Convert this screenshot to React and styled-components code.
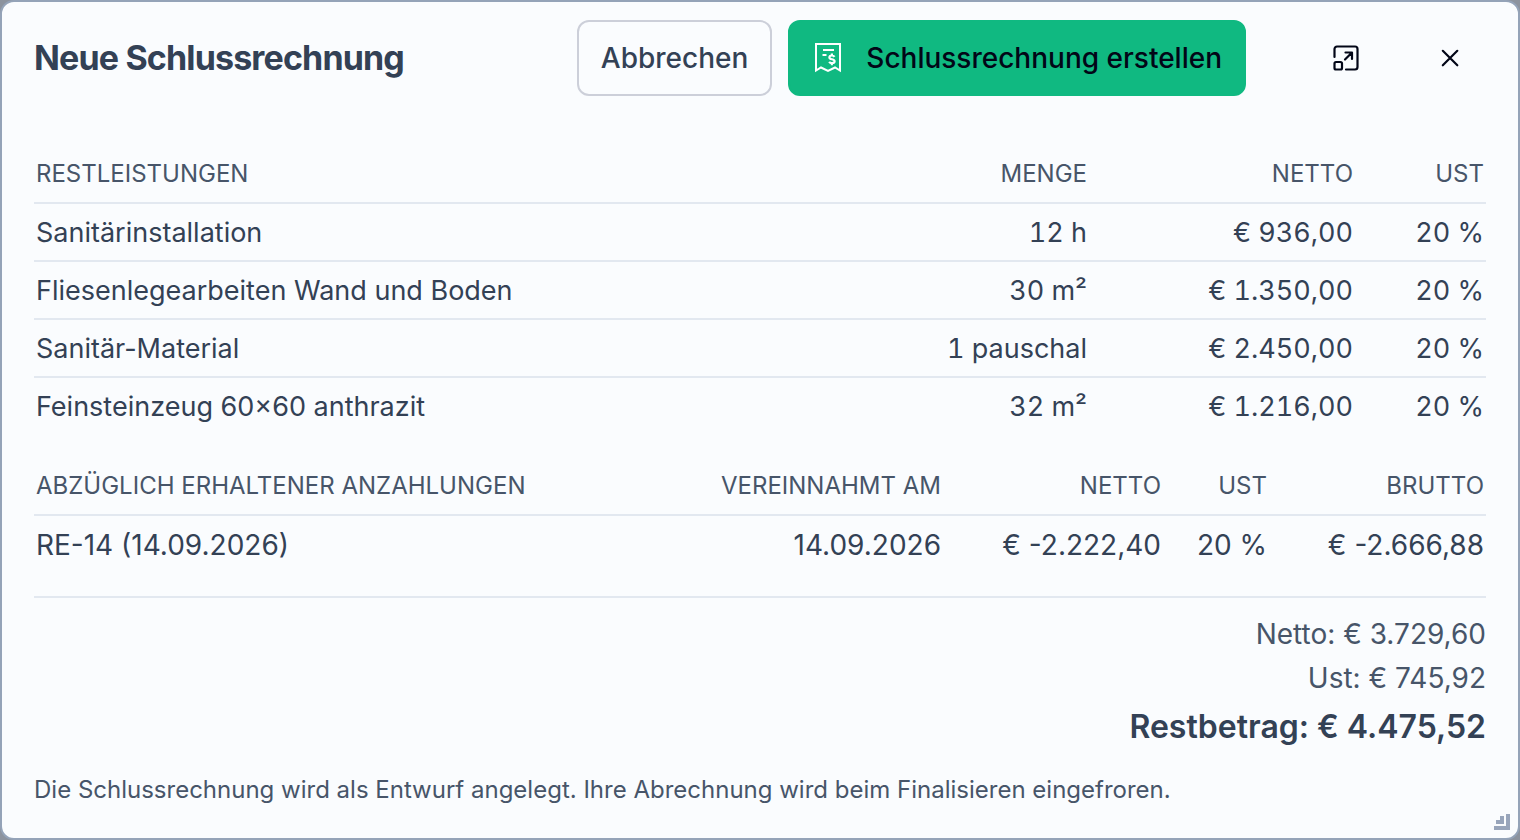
import React from "react";
import styled, { createGlobalStyle } from "styled-components";

const GlobalStyle = createGlobalStyle`
  * {
    box-sizing: border-box;
  }
  body {
    margin: 0;
    background: #8c939e;
    font-family: Inter, "Liberation Sans", sans-serif;
    color: #334155;
  }
`;

const Dialog = styled.section`
  position: relative;
  min-height: 100vh;
  padding: 18px 32px 28px;
  background: #fafcfe;
  border: 2px solid #94a3b8;
  border-radius: 14px;
`;
const Header = styled.header`
  display: flex;
  align-items: center;
  gap: 16px;
  margin-bottom: 50px;
`;
const Title = styled.h1`
  flex: 1;
  margin: 0;
  font-size: 34px;
  font-weight: 700;
  line-height: 48px;
  letter-spacing: -0.025em;
`;
const Button = styled.button`
  display: flex;
  align-items: center;
  gap: 22px;
  height: 76px;
  padding: 0 22px;
  border: 2px solid ${(props) => (props.$primary ? "#10b981" : "#cccfd9")};
  border-radius: 12px;
  background: ${(props) => (props.$primary ? "#10b981" : "transparent")};
  color: ${(props) => (props.$primary ? "#020617" : "#334155")};
  font-family: inherit;
  font-size: 28px;
  font-weight: 500;
  white-space: nowrap;
  cursor: pointer;
`;
const WindowActions = styled.div`
  display: flex;
  gap: 32px;
  margin-left: 48px;
`;
const IconButton = styled.button`
  display: flex;
  align-items: center;
  justify-content: center;
  width: 72px;
  height: 72px;
  padding: 0;
  border: none;
  border-radius: 12px;
  background: transparent;
  color: #020617;
  cursor: pointer;
`;
const Table = styled.table`
  width: 100%;
  margin-bottom: 24px;
  border-spacing: 0;
  table-layout: fixed;
  font-size: ${(props) => props.$size};
  text-align: right;
`;
const Col = styled.col`
  width: ${(props) => props.$width};
`;
const HeadCell = styled.th`
  padding: 12px 2px;
  border-bottom: 2px solid #e2e8f0;
  color: #475569;
  font-size: 24px;
  font-weight: 400;
  line-height: 32px;
  text-transform: uppercase;
  white-space: nowrap;
  &:first-child {
    text-align: left;
  }
`;
const Row = styled.tr`
  &:not(:last-child) td {
    border-bottom: 2px solid #e2e8f0;
  }
`;
const Cell = styled.td`
  padding: 9px 2px 7px;
  font-variant-numeric: ${(props) => (props.$tabular ? "tabular-nums" : "normal")};
  line-height: 40px;
  white-space: nowrap;
  &:first-child {
    text-align: left;
  }
`;
const Totals = styled.div`
  display: flex;
  flex-direction: column;
  align-items: flex-end;
  gap: 4px;
  padding-top: 16px;
  border-top: 2px solid #e2e8f0;
`;
const Total = styled.div`
  color: #475569;
  font-size: 28px;
  line-height: 40px;
`;
const GrandTotal = styled.div`
  font-size: 32px;
  font-weight: 600;
  line-height: 50px;
`;
const Note = styled.p`
  margin: 18px 0 0;
  color: #475569;
  font-size: 24px;
  line-height: 40px;
`;
const ResizeGrip = styled.svg`
  position: absolute;
  right: 8px;
  bottom: 8px;
  cursor: nwse-resize;
`;

const ReceiptIcon = () => (
  <svg width="32" height="32" viewBox="0 0 32 32" fill="none" stroke="#fff" strokeWidth="2">
    <path d="M4 28.500V2h24v26.500l-5-3-7 3.500-7-3.500z" />
    <path d="M11 8h11M10.500 13h4" />
    <path
      d="M22.500 14.800c-.6-.9-1.400-1.300-2.600-1.300-1.500 0-2.500.7-2.500 1.900 0 2.500 5.200 1.300 5.200 3.900 0 1.200-1.100 1.900-2.600 1.900-1.300 0-2.300-.5-2.800-1.500M19.900 11.500v2M19.900 21.200v2"
      strokeWidth="2.200"
    />
  </svg>
);

const ExpandIcon = () => (
  <svg
    width="32"
    height="32"
    viewBox="0 0 32 32"
    fill="none"
    stroke="currentColor"
    strokeWidth="2.200"
    strokeLinecap="round"
    strokeLinejoin="round"
  >
    <path d="M4.500 15V7a2.500 2.500 0 0 1 2.500-2.500h18A2.500 2.500 0 0 1 27.500 7v18a2.500 2.500 0 0 1-2.500 2.500h-9" />
    <rect x="4.500" y="20" width="7.500" height="7.500" rx="1.500" />
    <path d="M15 17.500l6.500-6.500M15.500 10.500h6.500V17" />
  </svg>
);

const CloseIcon = () => (
  <svg
    width="32"
    height="32"
    viewBox="0 0 32 32"
    fill="none"
    stroke="currentColor"
    strokeWidth="2.200"
    strokeLinecap="round"
  >
    <path d="M8.800 8.800l14.500 14.500M23.300 8.800L8.800 23.300" />
  </svg>
);

const services = [
  { name: "Sanitärinstallation", amount: "12 h", net: "€ 936,00", vat: "20 %" },
  { name: "Fliesenlegearbeiten Wand und Boden", amount: "30 m²", net: "€ 1.350,00", vat: "20 %" },
  { name: "Sanitär-Material", amount: "1 pauschal", net: "€ 2.450,00", vat: "20 %" },
  { name: "Feinsteinzeug 60×60 anthrazit", amount: "32 m²", net: "€ 1.216,00", vat: "20 %" },
];

const payments = [
  {
    name: "RE-14 (14.09.2026)",
    date: "14.09.2026",
    net: "€ -2.222,40",
    vat: "20 %",
    gross: "€ -2.666,88",
  },
];

const App = () => {
  return (
    <>
      <GlobalStyle />
      <Dialog role="dialog" aria-labelledby="dialog-title">
        <Header>
          <Title id="dialog-title">Neue Schlussrechnung</Title>
          <Button type="button">Abbrechen</Button>
          <Button type="button" $primary>
            <ReceiptIcon />
            Schlussrechnung erstellen
          </Button>
          <WindowActions>
            <IconButton type="button" aria-label="Maximieren">
              <ExpandIcon />
            </IconButton>
            <IconButton type="button" aria-label="Schließen">
              <CloseIcon />
            </IconButton>
          </WindowActions>
        </Header>
        <Table $size="27px">
          <colgroup>
            <Col />
            <Col $width="200px" />
            <Col $width="266px" />
            <Col $width="131px" />
          </colgroup>
          <thead>
            <tr>
              <HeadCell scope="col">Restleistungen</HeadCell>
              <HeadCell scope="col">Menge</HeadCell>
              <HeadCell scope="col">Netto</HeadCell>
              <HeadCell scope="col">Ust</HeadCell>
            </tr>
          </thead>
          <tbody>
            {services.map((item) => (
              <Row key={item.name}>
                <Cell>{item.name}</Cell>
                <Cell $tabular>{item.amount}</Cell>
                <Cell $tabular>{item.net}</Cell>
                <Cell $tabular>{item.vat}</Cell>
              </Row>
            ))}
          </tbody>
        </Table>
        <Table $size="28px">
          <colgroup>
            <Col />
            <Col $width="240px" />
            <Col $width="220px" />
            <Col $width="106px" />
            <Col $width="217px" />
          </colgroup>
          <thead>
            <tr>
              <HeadCell scope="col">Abzüglich erhaltener Anzahlungen</HeadCell>
              <HeadCell scope="col">Vereinnahmt am</HeadCell>
              <HeadCell scope="col">Netto</HeadCell>
              <HeadCell scope="col">Ust</HeadCell>
              <HeadCell scope="col">Brutto</HeadCell>
            </tr>
          </thead>
          <tbody>
            {payments.map((item) => (
              <Row key={item.name}>
                <Cell>{item.name}</Cell>
                <Cell>{item.date}</Cell>
                <Cell>{item.net}</Cell>
                <Cell>{item.vat}</Cell>
                <Cell>{item.gross}</Cell>
              </Row>
            ))}
          </tbody>
        </Table>
        <Totals>
          <Total>Netto: € 3.729,60</Total>
          <Total>Ust: € 745,92</Total>
          <GrandTotal>Restbetrag: € 4.475,52</GrandTotal>
        </Totals>
        <Note>
          Die Schlussrechnung wird als Entwurf angelegt. Ihre Abrechnung wird beim Finalisieren
          eingefroren.
        </Note>
        <ResizeGrip width="16" height="16" viewBox="0 0 16 16" fill="#98a5bb" aria-hidden="true">
          <path d="M12 0h4v16H0v-4h12zM6 2h4v8H2V6h4z" />
        </ResizeGrip>
      </Dialog>
    </>
  );
};

export default App;
